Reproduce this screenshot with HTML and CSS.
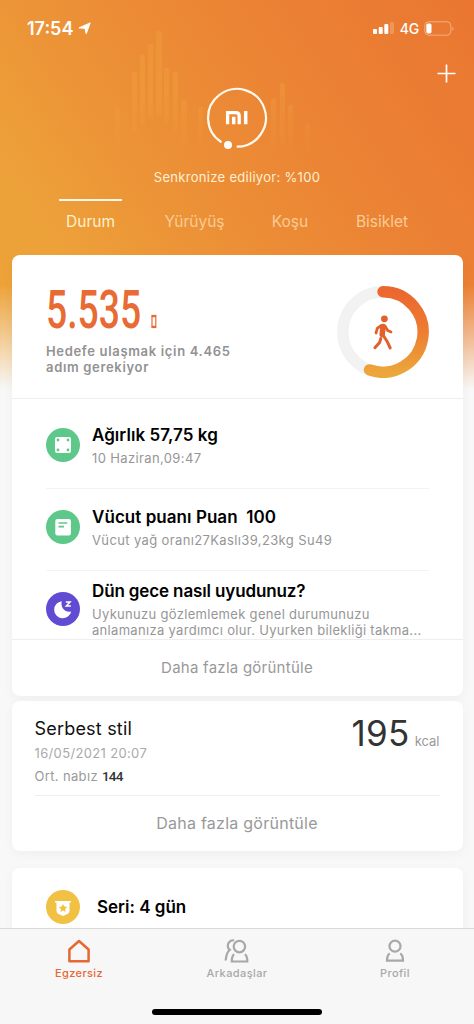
FILE: index.html
```html
<!DOCTYPE html>
<html lang="tr">
<head>
    <meta charset="UTF-8">
    <meta name="viewport" content="width=device-width, initial-scale=1.0">
    <title>Mi Fit</title>
    <link rel="stylesheet" href="styles.css">
</head>
<body>
<div class="screen">
    <svg class="wave" width="474" height="180" viewBox="0 0 474 180">
        <defs>
            <linearGradient id="fade" gradientUnits="userSpaceOnUse" x1="0" y1="30" x2="0" y2="155">
                <stop offset="0" stop-color="#f3a93c" stop-opacity=".3"/>
                <stop offset=".5" stop-color="#f3a93c" stop-opacity=".3"/>
                <stop offset="1" stop-color="#f3a93c" stop-opacity="0"/>
            </linearGradient>
        </defs>
        <g fill="url(#fade)">
            <rect x="115" y="107" width="5" height="40" rx="2"/>
            <rect x="132" y="72" width="5" height="60" rx="2"/>
            <rect x="140" y="55" width="5" height="70" rx="2"/>
            <rect x="148" y="44" width="5" height="75" rx="2"/>
            <rect x="156" y="31" width="6" height="85" rx="2"/>
            <rect x="164" y="68" width="5" height="55" rx="2"/>
            <rect x="173" y="72" width="5" height="60" rx="2"/>
            <rect x="181" y="100" width="6" height="45" rx="2"/>
            <rect x="198" y="107" width="5" height="40" rx="2"/>
            <rect x="271" y="98" width="5" height="55" rx="2"/>
            <rect x="280" y="83" width="5" height="65" rx="2"/>
            <rect x="288" y="105" width="5" height="48" rx="2"/>
            <rect x="305" y="123" width="5" height="32" rx="2"/>
        </g>
    </svg>

    <header class="hero">
        <div class="status-bar">
            <div class="status-left">
                <span class="clock">17:54</span>
                <svg width="13" height="13" viewBox="0 0 13 13"><path fill="#fff" stroke="#fff" stroke-linejoin="round" d="M12.2.9 8.2 11.7 6.9 6.3.9 5.9z"/></svg>
            </div>
            <div class="status-right">
                <svg width="22" height="12" viewBox="0 0 22 12" fill="#fff">
                    <rect x="0" y="7" width="4" height="5" rx="1"/>
                    <rect x="5.7" y="5" width="4" height="7" rx="1"/>
                    <rect x="11.3" y="2" width="4" height="10" rx="1"/>
                    <rect x="17" y="0" width="4" height="12" rx="1" opacity=".2"/>
                </svg>
                <span class="network">4G</span>
                <svg width="31" height="15" viewBox="0 0 31 15">
                    <rect x=".8" y=".8" width="26" height="13.4" rx="3.8" fill="none" stroke="#fff" stroke-opacity=".4"/>
                    <rect x="2.3" y="2.6" width="5.2" height="9.8" rx="1.6" fill="#fff"/>
                    <path d="M28.5 5v5q1.8-2.5 0-5z" fill="#fff" opacity=".5"/>
                </svg>
            </div>
        </div>
        <div class="add-row">
            <svg width="19" height="19" viewBox="0 0 19 19"><path d="M9.5.5v18M.5 9.5h18" stroke="#fff" stroke-width="1.7"/></svg>
        </div>
        <svg class="band" width="62" height="64" viewBox="0 0 62 64">
            <path d="M15.5 55.2A28.9 28.9 0 1 1 30.7 59.7" fill="none" stroke="#fffaf0" stroke-width="2.2"/>
            <circle cx="22" cy="58" r="4" fill="#fff"/>
            <path d="M21.6 37.2V25.6h8.2q3.4 0 3.4 3.4v8.2" fill="none" stroke="#fff" stroke-width="3.3"/>
            <path d="M27.7 29.8v7.4M39.7 24v13.2" stroke="#fff" stroke-width="3.5"/>
        </svg>
        <p class="sync">Senkronize ediliyor: %100</p>
        <nav class="tabs">
            <span class="tab active">Durum</span>
            <span class="tab">Yürüyüş</span>
            <span class="tab">Koşu</span>
            <span class="tab">Bisiklet</span>
        </nav>
    </header>

    <main class="content">
        <section class="card">
            <div class="summary">
                <div>
                    <div class="steps">
                        <span class="step-count">5.535</span>
                        <svg width="6" height="15" viewBox="0 0 6 15"><rect x="1" y="1.5" width="3.8" height="12" fill="none" stroke="#e86b35" stroke-width="1.2"/><path d="M.8 2.3h4.2M.8 12.7h4.2" stroke="#e86b35" stroke-width="2"/></svg>
                    </div>
                    <p class="goal">Hedefe ulaşmak için 4.465<br>adım gerekiyor</p>
                </div>
                <svg class="ring" width="92" height="92" viewBox="0 0 92 92">
                    <defs>
                        <linearGradient id="progress" x1="0" y1="0" x2="0" y2="1">
                            <stop offset="0" stop-color="#ec6730"/>
                            <stop offset=".5" stop-color="#ed7d30"/>
                            <stop offset="1" stop-color="#eca63b"/>
                        </linearGradient>
                    </defs>
                    <circle cx="46" cy="46" r="40.2" fill="none" stroke="#f2f2f2" stroke-width="11.4"/>
                    <path d="M46 5.8A40.2 40.2 0 1 1 32.5 83.9" fill="none" stroke="url(#progress)" stroke-width="11.4" stroke-linecap="round"/>
                    <g fill="none" stroke="#e3602c" stroke-linecap="round" stroke-linejoin="round">
                        <circle cx="47.4" cy="32.8" r="3.4" fill="#e3602c" stroke="none"/>
                        <path d="M46 40.5 45.2 48.5" stroke-width="5.5"/>
                        <path d="M43.6 39.8 40.3 42.4 39 47M48 40l2.7 4.4 3.3 1.5" stroke-width="2.8"/>
                        <path d="M46 49l4 6.2 3.2 6.8M43.8 52.5l-1.2 4-4.7 5.2" stroke-width="3"/>
                    </g>
                </svg>
            </div>

            <div class="items">
                <div class="item">
                    <svg class="item-icon" width="34" height="34" viewBox="0 0 34 34">
                        <circle cx="17" cy="17" r="17" fill="#5dc889"/>
                        <rect x="9" y="9" width="16" height="16" rx="2" fill="#fff"/>
                        <g fill="#5dc889"><circle cx="12" cy="12" r="1.4"/><circle cx="22" cy="12" r="1.4"/><circle cx="12" cy="22" r="1.4"/><circle cx="22" cy="22" r="1.4"/></g>
                    </svg>
                    <div class="item-text">
                        <h2 class="item-title">Ağırlık 57,75 kg</h2>
                        <p class="item-sub">10 Haziran,09:47</p>
                    </div>
                </div>
                <div class="item">
                    <svg class="item-icon" width="34" height="34" viewBox="0 0 34 34">
                        <circle cx="17" cy="17" r="17" fill="#5dc889"/>
                        <rect x="9.3" y="9" width="15.6" height="16.5" rx="2" fill="#fff"/>
                        <path d="M12.5 13h8.8M12.5 16.6h5.5" stroke="#5dc889" stroke-width="1.6"/>
                    </svg>
                    <div class="item-text">
                        <h2 class="item-title">Vücut puanı Puan&nbsp; 100</h2>
                        <p class="item-sub">Vücut yağ oranı27Kaslı39,23kg Su49</p>
                    </div>
                </div>
                <div class="item sleep">
                    <svg class="item-icon" width="34" height="34" viewBox="0 0 34 34">
                        <circle cx="17" cy="17" r="17" fill="#624bd3"/>
                        <path d="M15.7 9.2a8.6 8.6 0 1 0 9.5 10.2q-4 1.1-7-1.3-3.5-3.4-2.5-8.9z" fill="#fff"/>
                        <path d="M19.8 9.9h4.3l-3.8 4.2h4.6" fill="none" stroke="#fff" stroke-width="1.5"/>
                    </svg>
                    <div class="item-text">
                        <h2 class="item-title">Dün gece nasıl uyudunuz?</h2>
                        <p class="item-sub">Uykunuzu gözlemlemek genel durumunuzu<br>anlamanıza yardımcı olur. Uyurken bilekliği takma...</p>
                    </div>
                </div>
            </div>
            <div class="more">Daha fazla görüntüle</div>
        </section>

        <section class="card workout">
            <div class="workout-top">
                <div>
                    <h2 class="workout-title">Serbest stil</h2>
                    <p class="workout-date">16/05/2021 20:07</p>
                    <p class="pulse">Ort. nabız <b>144</b></p>
                </div>
                <div class="energy"><span class="kcal">195</span><span class="unit">kcal</span></div>
            </div>
            <div class="more">Daha fazla görüntüle</div>
        </section>

        <section class="card streak">
            <svg width="34" height="34" viewBox="0 0 34 34">
                <circle cx="17" cy="17" r="17" fill="#f1c143"/>
                <path d="M9 11h16v1.6h-1.5V21q0 2-2 3L17 26l-4.5-2q-2-1-2-3v-8.4H9z" fill="#fff"/>
                <path d="m17 14 1.3 2.6 2.9.4-2.1 2 .5 2.9-2.6-1.4-2.6 1.4.5-2.9-2.1-2 2.9-.4z" fill="#f1c143"/>
            </svg>
            <h2 class="streak-title">Seri: 4 gün</h2>
        </section>
    </main>

    <footer class="tabbar">
        <div class="bar-items">
            <div class="bar-item active">
                <svg width="24" height="24" viewBox="0 0 24 24"><path d="M2.4 10.5 12 2l9.6 8.5v11.8H2.4z" fill="none" stroke="currentColor" stroke-width="2.5" stroke-linejoin="round"/></svg>
                <span>Egzersiz</span>
            </div>
            <div class="bar-item">
                <svg width="26" height="24" viewBox="0 0 26 24" fill="none" stroke="currentColor" stroke-width="2.2">
                    <circle cx="15.4" cy="7.6" r="5.7"/>
                    <path d="M10.2 1.3C5.5.8 3.2 4.8 4 8.2c.3 1.3 1 2 1.8 2.7C3.5 12.5 2.2 16 1.6 21.5"/>
                    <path d="M10.2 15.2C8 16.5 7.800 19 7.800 22.500h15.500c0-3.500-.2-6-2.500-7.300"/>
                </svg>
                <span>Arkadaşlar</span>
            </div>
            <div class="bar-item">
                <svg width="20" height="24" viewBox="0 0 20 24" fill="none" stroke="currentColor" stroke-width="2.2">
                    <circle cx="10" cy="7.2" r="5.5"/>
                    <path d="M4.8 14.5C2.5 15.8 2 18 2 21.7h16c0-3.7-.5-5.9-2.8-7.2"/>
                </svg>
                <span>Profil</span>
            </div>
        </div>
        <div class="home-line"></div>
    </footer>
</div>
</body>
</html>
```

FILE: styles.css
```css
* {
    box-sizing: border-box;
}
body {
    margin: 0;
    font-family: Inter, "Liberation Sans", sans-serif;
    background: #f8f8f8;
}
h2, p {
    margin: 0;
}
svg {
    display: block;
    flex-shrink: 0;
}
.screen {
    position: relative;
    width: 474px;
    height: 1024px;
    overflow: hidden;
    display: flex;
    flex-direction: column;
    background:
        linear-gradient(to bottom, rgba(248,248,248,0) 285px, rgba(248,248,248,.45) 335px, #f8f8f8 390px),
        linear-gradient(56deg, #eda43a 0%, #eda139 22%, #ec9437 38%, #ec8d36 50%, #eb8234 70%, #ea7631 100%) 0 0 / 474px 400px no-repeat;
}
.wave {
    position: absolute;
    left: 0;
    top: 0;
}

/* header */
.hero {
    position: relative;
    height: 255px;
    flex-shrink: 0;
    color: #fff;
}
.status-bar {
    height: 56px;
    padding: 0 19px 0 27px;
    display: flex;
    align-items: center;
    justify-content: space-between;
}
.status-left {
    display: flex;
    align-items: center;
    gap: 5px;
}
.clock {
    font-size: 18px;
    font-weight: 600;
}
.status-right {
    display: flex;
    align-items: center;
    gap: 5px;
}
.network {
    font-size: 14px;
    font-weight: 500;
    letter-spacing: -.2px;
}
.add-row {
    height: 31px;
    padding: 8px 18px 0 0;
    display: flex;
    justify-content: flex-end;
}
.band {
    margin-left: 206px;
}
.sync {
    margin-top: 18px;
    height: 16px;
    line-height: 16px;
    font-size: 13px;
    text-align: center;
    letter-spacing: .3px;
    color: #fff0d4;
}
.tabs {
    display: grid;
    grid-template-columns: 63px 145px 46px 138px;
    padding-left: 59px;
    margin-top: 14px;
}
.tab {
    border-top: 2px solid transparent;
    padding-top: 11px;
    line-height: 20px;
    font-size: 15.5px;
    text-align: center;
    color: #facb94;
}
.tab.active {
    border-color: #fff8e8;
    color: #fff0ce;
}

/* cards */
.content {
    position: relative;
    flex: 1;
    min-height: 0;
    overflow: hidden;
    padding: 0 11.5px;
}
.card {
    background: #fff;
    border-radius: 8px;
    box-shadow: 0 3px 12px rgba(0,0,0,.04);
}
.summary {
    height: 144px;
    padding: 31px 34px 0 34.5px;
    display: flex;
    justify-content: space-between;
    border-bottom: 1px solid #eee;
}
.steps {
    height: 47px;
    display: flex;
    align-items: flex-start;
}
.steps svg {
    margin-top: 28px;
}
.step-count {
    width: 105px;
    font-family: Roboto, sans-serif;
    font-size: 54px;
    font-weight: 500;
    line-height: 47px;
    color: #e86b35;
    transform: scaleX(.69);
    transform-origin: left;
}
.goal {
    margin-top: 10px;
    font-size: 13px;
    font-weight: 600;
    line-height: 16px;
    letter-spacing: .67px;
    color: #929292;
    white-space: nowrap;
}
.items {
    height: 241px;
    padding: 8px 34px 0 34.5px;
    border-bottom: 1px solid #eee;
}
.item {
    height: 82px;
    padding-bottom: 5px;
    display: flex;
    align-items: center;
    gap: 12px;
    border-bottom: 1px solid #f3f3f3;
}
.item-title {
    font-size: 17px;
    font-weight: 600;
    line-height: 21px;
    letter-spacing: .05px;
    color: #000;
    white-space: nowrap;
}
.item-sub {
    margin-top: 4px;
    font-size: 13px;
    line-height: 16px;
    letter-spacing: .37px;
    color: #969696;
    white-space: nowrap;
}
.item.sleep {
    height: 66px;
    padding: 10px 0 0;
    border: 0;
}
.item.sleep .item-title {
    letter-spacing: -.13px;
}
.item.sleep .item-sub {
    letter-spacing: .31px;
}
.more {
    height: 56px;
    line-height: 55px;
    font-size: 15px;
    text-align: center;
    letter-spacing: .25px;
    color: #999;
}
.workout {
    margin-top: 5px;
    height: 150px;
    padding: 0 23px;
}
.workout-top {
    height: 95px;
    padding-top: 16px;
    display: flex;
    justify-content: space-between;
    border-bottom: 1px solid #eee;
}
.workout .more {
    font-size: 16px;
}
.workout-title {
    font-size: 18px;
    font-weight: 400;
    line-height: 24px;
    letter-spacing: .2px;
    color: #111;
}
.workout-date, .pulse {
    font-size: 13px;
    line-height: 16px;
    letter-spacing: .35px;
    color: #aaa;
}
.workout-date {
    margin-top: 4px;
}
.pulse {
    margin-top: 7px;
    color: #999;
}
.pulse b {
    font-family: Roboto, sans-serif;
    font-weight: 500;
    font-size: 13.5px;
    letter-spacing: -.8px;
    color: #333;
}
.energy {
    display: flex;
    align-items: baseline;
    gap: 5px;
}
.kcal {
    font-size: 35px;
    line-height: 32px;
    letter-spacing: .3px;
    color: #333;
}
.unit {
    font-size: 13px;
    color: #999;
}
.streak {
    margin-top: 17px;
    height: 100px;
    padding: 22px 34.5px;
    display: flex;
    gap: 17px;
}
.streak-title {
    font-size: 17px;
    font-weight: 600;
    line-height: 35px;
    color: #000;
}

/* bottom bar */
.tabbar {
    position: relative;
    height: 96px;
    flex-shrink: 0;
    background: #f7f7f7;
    border-top: 1px solid #d8d8d8;
}
.bar-items {
    height: 80px;
    padding-top: 10px;
    display: grid;
    grid-template-columns: repeat(3, 158px);
}
.bar-item {
    display: flex;
    flex-direction: column;
    align-items: center;
    gap: 2px;
    font-size: 11px;
    font-weight: 500;
    line-height: 16px;
    letter-spacing: .4px;
    color: #a8a8a8;
}
.bar-item.active {
    color: #e66832;
}
.home-line {
    width: 170px;
    height: 6px;
    margin: 0 auto;
    border-radius: 3px;
    background: #000;
}
```
